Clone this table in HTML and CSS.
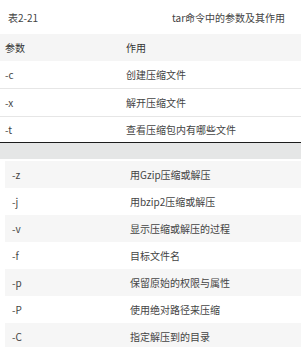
FILE: index.html
```html
<!DOCTYPE html>
<html lang="zh">
<head>
<meta charset="utf-8">
<link rel="stylesheet" href="styles.css">
</head>
<body>
<div class="caption">
  <span class="cap-num">表2-21</span>
  <span class="cap-title">tar命令中的参数及其作用</span>
</div>
<table class="t1">
  <tr class="head"><td class="c1">参数</td><td class="c2">作用</td></tr>
  <tr><td class="c1">-c</td><td class="c2">创建压缩文件</td></tr>
  <tr><td class="c1">-x</td><td class="c2">解开压缩文件</td></tr>
  <tr class="last"><td class="c1">-t</td><td class="c2">查看压缩包内有哪些文件</td></tr>
</table>
<div class="divider"></div>
<table class="t2">
  <tr class="odd"><td class="c1">-z</td><td class="c2">用Gzip压缩或解压</td></tr>
  <tr><td class="c1">-j</td><td class="c2">用bzip2压缩或解压</td></tr>
  <tr class="odd"><td class="c1">-v</td><td class="c2">显示压缩或解压的过程</td></tr>
  <tr><td class="c1">-f</td><td class="c2">目标文件名</td></tr>
  <tr class="odd"><td class="c1">-p</td><td class="c2">保留原始的权限与属性</td></tr>
  <tr><td class="c1">-P</td><td class="c2">使用绝对路径来压缩</td></tr>
  <tr class="odd"><td class="c1">-C</td><td class="c2">指定解压到的目录</td></tr>
</table>
</body>
</html>
```
FILE: styles.css
```css
html, body {
  margin: 0;
  padding: 0;
  background: #fff;
}
body {
  width: 301px;
  height: 347px;
  overflow: hidden;
  font-family: "Noto Sans CJK SC", "Noto Sans", sans-serif;
  font-size: 10px;
  color: #444;
}
.caption {
  height: 34px;
  display: flex;
  align-items: center;
}
.cap-num {
  padding-left: 8px;
  width: 164px;
}
.cap-title {
  color: #444;
}
table {
  border-collapse: collapse;
  border-spacing: 0;
}
td {
  padding: 0;
  height: 27px;
  vertical-align: middle;
  white-space: nowrap;
}
.t1 {
  width: 301px;
}
.t1 tr {
  border-bottom: 1px solid #e6e6e6;
}
.t1 tr.head {
  background: #f5f5f5;
  border-bottom: none;
  color: #333;
}
.t1 tr.last {
  border-bottom: none;
}
.t1 tr.last td {
  height: 25px;
}
.t1 .c1 {
  padding-left: 5px;
  width: 121px;
}
.divider {
  height: 16px;
  border-top: 1px solid #1c1c1c;
  border-bottom: 2px solid #fff;
  background: #e5e6e6;
}
.t2 {
  margin-left: 5px;
  width: 296px;
}
.t2 tr.odd {
  background: #f6f6f6;
}
.t2 .c1 {
  padding-left: 7px;
  width: 118px;
}
```
